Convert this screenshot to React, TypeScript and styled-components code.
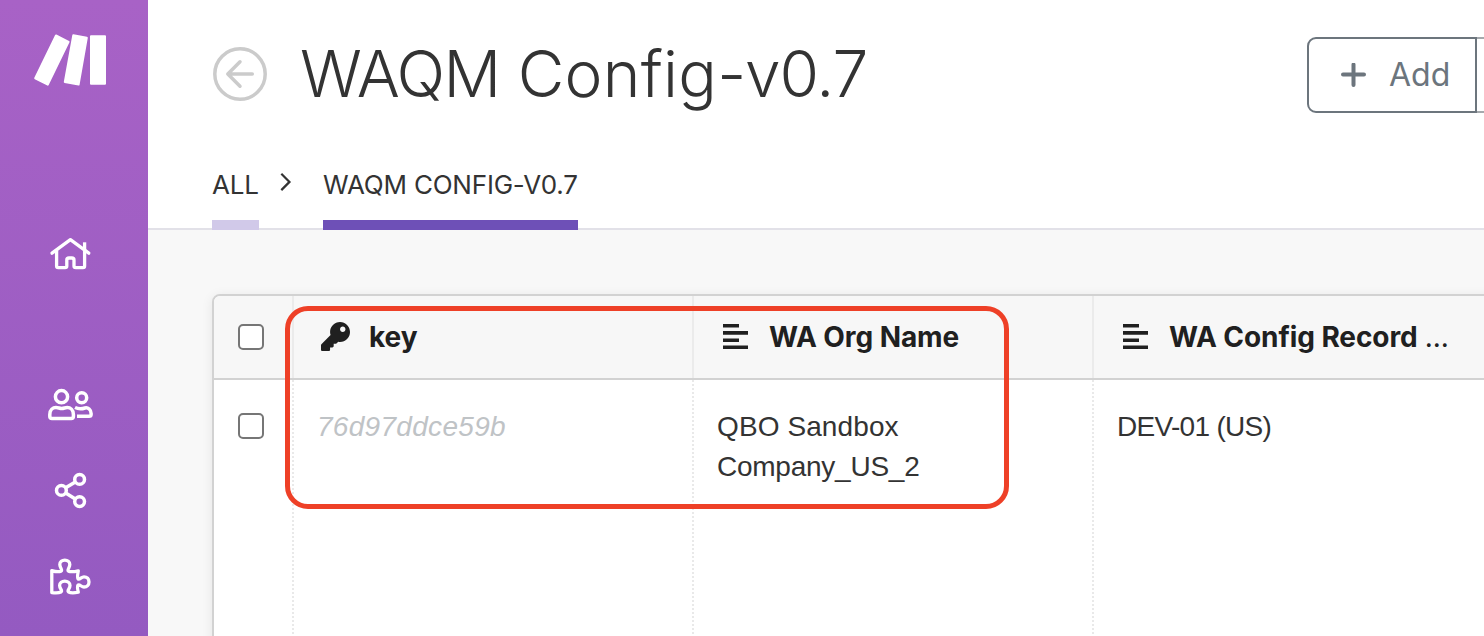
import React from "react";
import styled, { createGlobalStyle } from "styled-components";
import { FaKey } from "react-icons/fa";

const GlobalStyle = createGlobalStyle`
  *, *::before, *::after { box-sizing: border-box; }
  body { margin: 0; overflow: hidden; background: #fff; color: #333; font-family: Inter, sans-serif; }
  svg { display: block; }
`;

const Page = styled.div`
  display: flex;
  width: 100vw;
  height: 636px;
  overflow: hidden;
`;

const Sidebar = styled.nav`
  flex: 0 0 148px;
  display: flex;
  flex-direction: column;
  align-items: flex-start;
  padding: 32px 0 0 32px;
  background: linear-gradient(180deg, #a862c6 0%, #945ac1 100%);
`;

const NavIcon = styled.svg<{ $top: number; $stroke?: number }>`
  flex: none;
  width: 76px;
  height: 56px;
  margin-top: ${(p) => p.$top}px;
  fill: none;
  stroke: #fff;
  stroke-width: ${(p) => p.$stroke ?? 3.5};
  stroke-linejoin: round;
`;

const Main = styled.main`
  flex: 1;
  min-width: 0;
  display: flex;
  flex-direction: column;
  background: #f8f8f8;
`;

const Header = styled.header`
  flex: none;
  height: 230px;
  display: flex;
  flex-direction: column;
  justify-content: space-between;
  padding-left: 64px;
  background: #fff;
  box-shadow: inset 0 -2px #e2e1e8;
`;

const TitleRow = styled.div`
  display: flex;
  align-items: center;
  height: 148px;
`;

const BackIcon = styled.svg`
  width: 56px;
  height: 56px;
  fill: none;
  stroke: #cbcbcb;
  stroke-width: 3.5;
  stroke-linecap: round;
  stroke-linejoin: round;
`;

const Title = styled.h1`
  margin: 0 auto 0 32px;
  font-size: 64px;
  line-height: 78px;
  font-weight: 300;
  white-space: nowrap;
`;

const Tracked = styled.span<{ $spacing: number }>`
  letter-spacing: ${(p) => p.$spacing}px;
`;

const ButtonGroup = styled.div`
  display: flex;
  width: 177px;
  height: 76px;
  margin-top: 2px;
  overflow: hidden;
`;

const AddButton = styled.button`
  flex: none;
  display: flex;
  align-items: center;
  width: 170px;
  padding: 0 0 0 32px;
  gap: 23px;
  border: 2px solid #6c757d;
  border-radius: 9px 0 0 9px;
  background: #fff;
  color: #6c757d;
  font: 400 32px/40px Inter, sans-serif;
`;

const NextButton = styled.div`
  flex: none;
  width: 60px;
  border: 2px solid #a5a9ad;
  border-left: 0;
`;

const Tabs = styled.div`
  display: flex;
  height: 70px;
`;

const Tab = styled.div<{ $width: number; $active?: boolean }>`
  width: ${(p) => p.$width}px;
  height: 70px;
  padding-top: 8px;
  border-bottom: 10px solid ${(p) => (p.$active ? "#6e50b7" : "#d1c9e9")};
  font-size: 26px;
  line-height: 34px;
  letter-spacing: -0.2px;
  white-space: nowrap;
`;

const Chevron = styled.svg`
  width: 64px;
  height: 44px;
  fill: none;
  stroke: #333;
  stroke-width: 2.2;
`;

const Content = styled.section`
  position: relative;
  flex: 1;
  padding: 64px 0 0 64px;
`;

const Table = styled.div`
  width: 1500px;
  height: 600px;
  border: 2px solid #d2d2d2;
  border-radius: 8px;
  background: #fff;
  box-shadow: 0 2px 12px rgba(0, 0, 0, 0.08);
  overflow: hidden;
`;

const Row = styled.div<{ $head?: boolean }>`
  display: grid;
  grid-template-columns: 78px 400px 400px 1fr;
  height: ${(p) => (p.$head ? "84px" : "514px")};
  background: ${(p) => (p.$head ? "#f7f7f7" : "#fff")};
  border-bottom: ${(p) => (p.$head ? "2px solid #d2d2d2" : "0")};
`;

const CheckCell = styled.div<{ $top: number }>`
  padding: ${(p) => p.$top}px 0 0 24px;
`;

const Checkbox = styled.div`
  width: 26px;
  height: 26px;
  border: 2px solid #767676;
  border-radius: 5px;
  background: #fff;
`;

const HeadCell = styled.div`
  display: flex;
  align-items: center;
  border-left: 2px solid #ebebeb;
  padding-left: 27px;
  color: #202020;
  font-size: 28px;
  font-weight: 700;
  letter-spacing: -0.08px;
  white-space: nowrap;
`;

const HeadIcon = styled.span<{ $raise?: number }>`
  width: 48px;
  padding-bottom: ${(p) => p.$raise ?? 0}px;
`;

const Ellipsis = styled.span`
  margin-left: 7px;
  font-weight: 400;
`;

const Cell = styled.div<{ $muted?: boolean; $spacing?: number }>`
  padding: 27px 0 0 23px;
  border-left: 2px dotted #e9e9e9;
  color: ${(p) => (p.$muted ? "#bfc3c6" : "#333")};
  font: ${(p) => (p.$muted ? "italic" : "normal")} 28px/40px "Liberation Sans", Arial, sans-serif;
  letter-spacing: ${(p) => p.$spacing ?? 0}px;
  white-space: pre-line;
`;

const Highlight = styled.div`
  position: absolute;
  left: 137px;
  top: 76px;
  width: 724px;
  height: 203px;
  border: 5px solid #ee4027;
  border-radius: 23px;
  pointer-events: none;
`;

const TextIcon = () => (
  <svg width="28" height="26" viewBox="-2 0 28 26" fill="none" stroke="#202020" strokeWidth="3.6">
    <path d="M0 1.8H16M0 8.9H25M0 16.2H16M0 23.3H25" />
  </svg>
);

export default function App() {
  return (
    <Page>
      <GlobalStyle />
      <Sidebar>
        <NavIcon $top={0} $stroke={2} viewBox="32 32 76 56">
          <path
            d="M56 35.5L68.6 41.8L47.8 84.6L35.2 78.3ZM73.3 35.2L86.8 37.8L78.6 84.6L64.8 82ZM91 36.3H105V83.8H91Z"
            fill="#fff"
          />
        </NavIcon>
        <NavIcon $top={138} $stroke={3.3} viewBox="32 226 76 56">
          <path d="M52 253.2L70.4 239.7L88.8 253.2" strokeLinecap="round" />
          <path d="M84.6 242.3V250" />
          <path d="M56.6 250.5V266C56.6 267.2 57 267.6 58.2 267.6H65C66.2 267.6 66.8 267.2 66.8 266V260C66.8 258.6 67.6 258 69 258H71.8C73.2 258 74 258.6 74 260V266C74 267.2 74.6 267.6 75.8 267.6H83C84.2 267.6 84.6 267.2 84.6 266V250.5" />
        </NavIcon>
        <NavIcon $top={95} viewBox="32 377 76 56">
          <circle cx="61.5" cy="396.7" r="6.1" />
          <circle cx="81.7" cy="397.7" r="5" />
          <path d="M56 407.6C53 407.6 49.8 410 49.8 414.5V416.5C49.8 418 50.5 418.4 52 418.4H71.2C72.7 418.4 73.4 418 73.4 416.5V414.5C73.4 410 70.2 407.6 67.2 407.6C65 407.6 64 408.5 61.7 408.5C59.5 408.5 58.2 407.6 56 407.6Z" />
          <path d="M75 407.5C78 409 82 409 85 408C88 407.3 91.1 409.6 91.1 413.5V414.5C91.1 415.8 90.4 416.3 89 416.3H77" />
        </NavIcon>
        <NavIcon $top={30} viewBox="32 463 76 56">
          <circle cx="61.4" cy="490.4" r="4.9" />
          <circle cx="79.6" cy="479.4" r="4.9" />
          <circle cx="79.6" cy="501.6" r="4.9" />
          <path d="M65.7 487.8L75.3 482M65.7 493L75.3 499" />
        </NavIcon>
        <NavIcon $top={30} $stroke={3.3} viewBox="32 549 76 56">
          <path
            d="M51.8 570.6V592.6C55 593 59 593 61 592C63 590.5 59.6 588.8 59.6 585.6C59.6 582.8 62 581.2 64.8 581.2S70 582.8 70 585.6C70 588.8 66.6 590.5 68.6 592C70.5 593 75 592.8 78.3 592.2C77.6 589.5 76.8 586.5 78.2 585C80 584.2 81.3 587 84 587C87 587 89 584.8 89 581.9S87 576.8 84 576.8C81.3 576.8 80 579.8 78.2 579C76.8 577.5 77.8 574 78.3 570.8C75 571.6 70.5 572 68.6 571.2C66.6 569.8 69.8 567.8 69.8 564.6C69.8 561.8 67.6 560.2 64.8 560.2S59.8 561.8 59.8 564.6C59.8 567.8 63 569.8 61 571.2C59 572 55 571.6 51.8 570.6Z"
          />
        </NavIcon>
      </Sidebar>
      <Main>
        <Header>
          <TitleRow>
            <BackIcon viewBox="0 0 56 56">
              <circle cx="28" cy="28" r="25.2" />
              <path d="M40.3 28H15.8M28 15.8L15.8 28L28 40.2" />
            </BackIcon>
            <Title>
              <Tracked $spacing={-1.5}>WAQM</Tracked> <Tracked $spacing={0.3}>Config</Tracked>
              <Tracked $spacing={-1.1}>-v0.7</Tracked>
            </Title>
            <ButtonGroup>
              <AddButton>
                <svg width="25" height="25" viewBox="0 0 25 25" stroke="currentColor" strokeWidth="4" strokeLinecap="round">
                  <path d="M2 11.5H23M12.5 1.5V22" />
                </svg>
                Add
              </AddButton>
              <NextButton />
            </ButtonGroup>
          </TitleRow>
          <Tabs>
            <Tab $width={47}>ALL</Tab>
            <Chevron viewBox="0 0 64 44">
              <path d="M22.3 13.7L30.5 21.9L22.3 30.1" />
            </Chevron>
            <Tab $width={255} $active>WAQM CONFIG-V0.7</Tab>
          </Tabs>
        </Header>
        <Content>
          <Table>
            <Row $head>
              <CheckCell $top={28}><Checkbox /></CheckCell>
              <HeadCell>
                <HeadIcon $raise={2}><FaKey size={29} /></HeadIcon>
                key
              </HeadCell>
              <HeadCell>
                <HeadIcon><TextIcon /></HeadIcon>
                WA Org Name
              </HeadCell>
              <HeadCell>
                <HeadIcon><TextIcon /></HeadIcon>
                WA Config Record<Ellipsis>...</Ellipsis>
              </HeadCell>
            </Row>
            <Row>
              <CheckCell $top={33}><Checkbox /></CheckCell>
              <Cell $muted $spacing={0.3}>76d97ddce59b</Cell>
              <Cell>
                <Tracked $spacing={0.1}>QBO Sandbox</Tracked>
                <br />
                <Tracked $spacing={-0.25}>Company_US_2</Tracked>
              </Cell>
              <Cell $spacing={-0.7}>DEV-01 (US)</Cell>
            </Row>
          </Table>
          <Highlight />
        </Content>
      </Main>
    </Page>
  );
}
